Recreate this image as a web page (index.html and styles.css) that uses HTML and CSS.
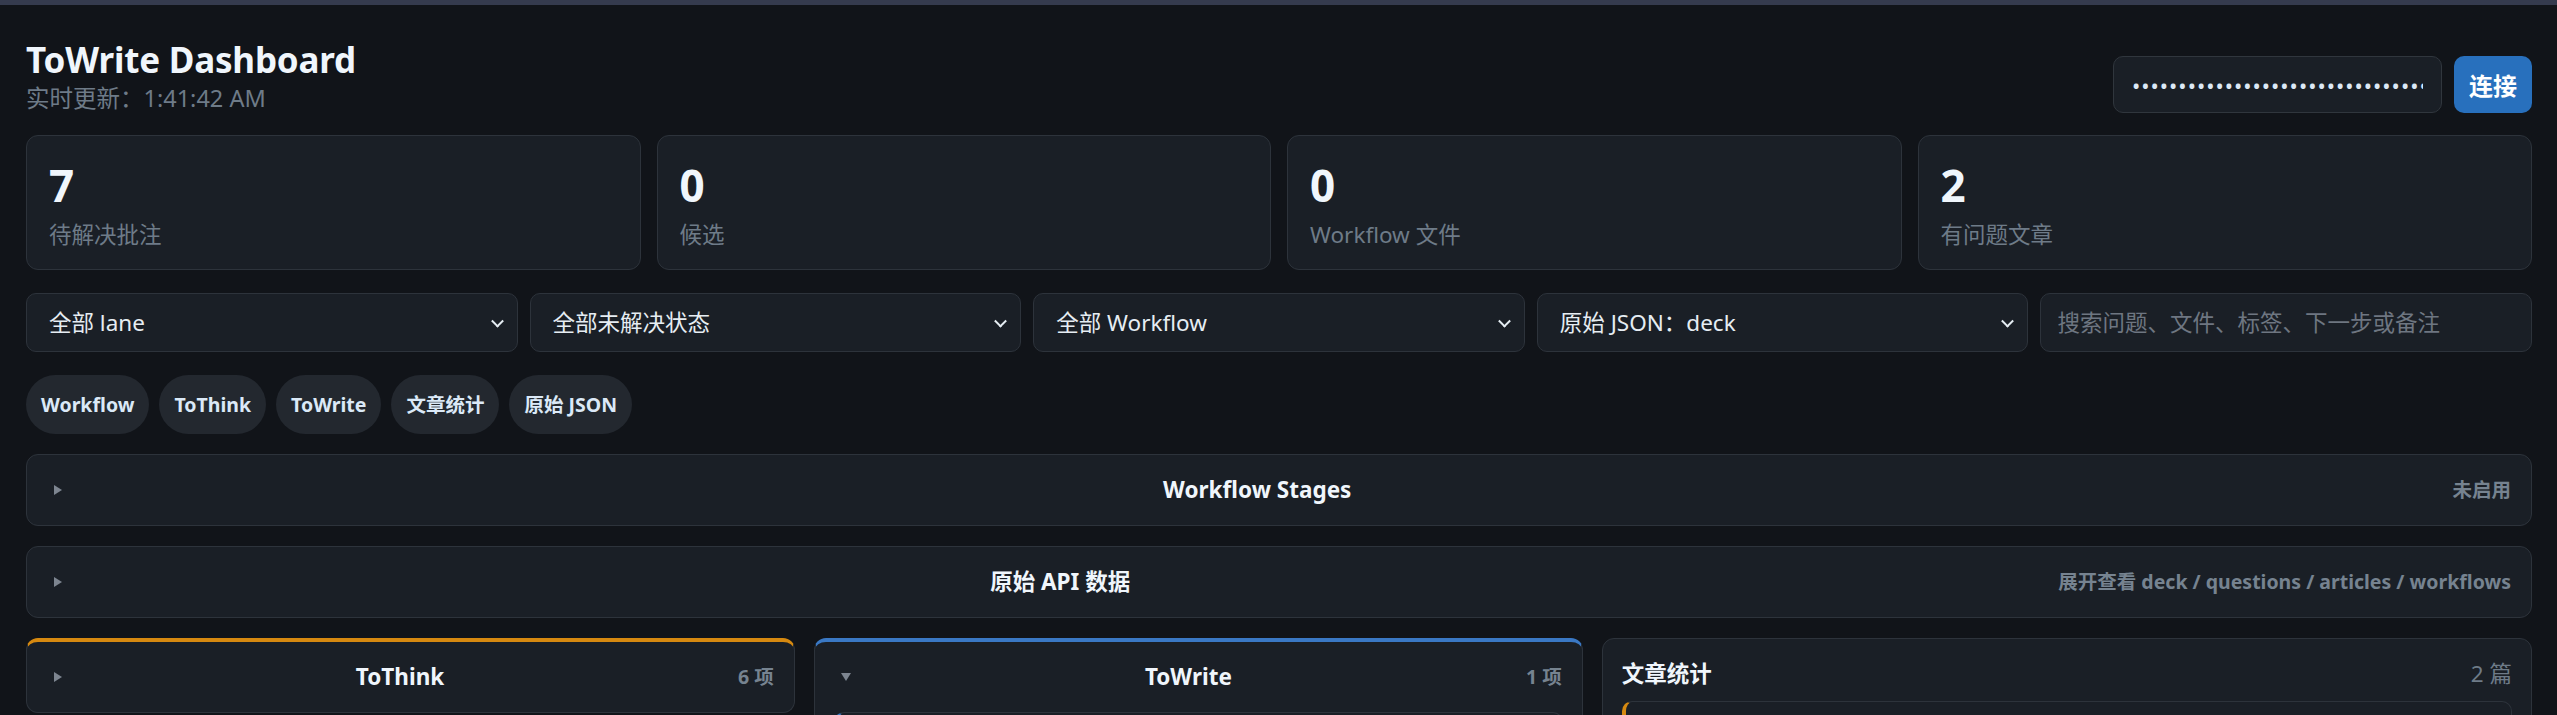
FILE: index.html
```html
<!DOCTYPE html>
<html lang="zh-CN">

<head>
    <meta charset="UTF-8">
    <meta name="viewport" content="width=device-width, initial-scale=1.0">
    <title>ToWrite Dashboard</title>
    <link rel="stylesheet" href="styles.css">
</head>

<body>
    <div class="topbar"></div>
    <main class="page">
        <header class="page-header">
            <div class="brand">
                <h1>ToWrite Dashboard</h1>
                <p class="updated">实时更新：1:41:42 AM</p>
            </div>
            <div class="connect">
                <input type="password" class="token-input" value="towrite-local-dashboard-token-2024-xx">
                <button class="connect-btn">连接</button>
            </div>
        </header>

        <section class="stats">
            <div class="stat">
                <div class="stat-num">7</div>
                <div class="stat-label">待解决批注</div>
            </div>
            <div class="stat">
                <div class="stat-num">0</div>
                <div class="stat-label">候选</div>
            </div>
            <div class="stat">
                <div class="stat-num">0</div>
                <div class="stat-label">Workflow 文件</div>
            </div>
            <div class="stat">
                <div class="stat-num">2</div>
                <div class="stat-label">有问题文章</div>
            </div>
        </section>

        <section class="filters">
            <div class="select-wrap">
                <select class="filter">
                    <option>全部 lane</option>
                </select>
            </div>
            <div class="select-wrap">
                <select class="filter">
                    <option>全部未解决状态</option>
                </select>
            </div>
            <div class="select-wrap">
                <select class="filter">
                    <option>全部 Workflow</option>
                </select>
            </div>
            <div class="select-wrap">
                <select class="filter">
                    <option>原始 JSON：deck</option>
                </select>
            </div>
            <input type="text" class="filter search" placeholder="搜索问题、文件、标签、下一步或备注">
        </section>

        <nav class="chips">
            <button class="chip">Workflow</button>
            <button class="chip">ToThink</button>
            <button class="chip">ToWrite</button>
            <button class="chip">文章统计</button>
            <button class="chip">原始 JSON</button>
        </nav>

        <details class="panel">
            <summary class="panel-head">
                <span class="caret"></span>
                <span class="panel-title">Workflow Stages</span>
                <span class="panel-meta">未启用</span>
            </summary>
        </details>

        <details class="panel">
            <summary class="panel-head">
                <span class="caret"></span>
                <span class="panel-title">原始 API 数据</span>
                <span class="panel-meta">展开查看 deck / questions / articles / workflows</span>
            </summary>
        </details>

        <section class="lanes">
            <details class="lane lane-think">
                <summary class="panel-head">
                    <span class="caret"></span>
                    <span class="panel-title">ToThink</span>
                    <span class="panel-meta">6 项</span>
                </summary>
                <div class="lane-body">
                    <div class="item item-think">
                        <div class="item-title">待思考的批注</div>
                    </div>
                </div>
            </details>

            <details class="lane lane-write" open>
                <summary class="panel-head">
                    <span class="caret"></span>
                    <span class="panel-title">ToWrite</span>
                    <span class="panel-meta">1 项</span>
                </summary>
                <div class="lane-body">
                    <div class="item item-write">
                        <div class="item-title">补写段落</div>
                        <div class="item-meta">articles / draft.md</div>
                    </div>
                </div>
            </details>

            <div class="lane articles">
                <div class="articles-head">
                    <span class="articles-title">文章统计</span>
                    <span class="articles-count">2 篇</span>
                </div>
                <div class="lane-body">
                    <div class="item item-think">
                        <div class="item-title">draft.md</div>
                        <div class="item-meta">5 条批注</div>
                    </div>
                    <div class="item item-think">
                        <div class="item-title">notes.md</div>
                        <div class="item-meta">2 条批注</div>
                    </div>
                </div>
            </div>
        </section>
    </main>
</body>

</html>
```

FILE: styles.css
```css
html {
    scrollbar-width: none;
}

body {
    margin: 0;
    background-color: #111419;
    color: #e6edf3;
    font-family: "Noto Sans", "Noto Sans CJK SC", sans-serif;
    font-size: 22.5px;
}

.topbar {
    height: 5px;
    background-color: #353b4e;
}

.page {
    display: flex;
    flex-direction: column;
    gap: 20px;
    padding: 33px 25px 40px 26px;
}

/* HEADER */
.page-header {
    display: flex;
    justify-content: space-between;
    align-items: flex-end;
}

.brand h1 {
    margin: 0;
    font-size: 35px;
    line-height: 43px;
    font-weight: 700;
    letter-spacing: -0.2px;
    color: #f0f6fc;
}

.updated {
    margin: 2px 0 0;
    font-size: 23.5px;
    line-height: 30px;
    color: #6e7b88;
}

.connect {
    display: flex;
    gap: 12px;
}

.token-input {
    box-sizing: border-box;
    width: 329px;
    height: 57px;
    padding: 0 18px;
    background-color: #1a1f26;
    border: 1px solid #30363d;
    border-radius: 10px;
    color: #dce8f5;
    font-family: inherit;
    font-size: 22px;
    letter-spacing: 1px;
    outline: none;
}

.connect-btn {
    height: 57px;
    width: 78px;
    background-color: #2870bd;
    color: #fff;
    border: none;
    border-radius: 10px;
    font-family: inherit;
    font-size: 24px;
    font-weight: 700;
    cursor: pointer;
}

/* STATS */
.stats {
    display: grid;
    grid-template-columns: repeat(4, 1fr);
    gap: 16px;
    margin-top: 2px;
}

.stat {
    background-color: #1a1f26;
    border: 1px solid #2d333b;
    border-radius: 12px;
    padding: 24px 22px 18px;
}

.stat-num {
    font-size: 44px;
    line-height: 50px;
    font-weight: 700;
    color: #f0f6fc;
}

.stat-label {
    margin-top: 9px;
    line-height: 32px;
    color: #6e7b88;
}

/* FILTERS */
.filters {
    display: grid;
    grid-template-columns: repeat(5, 1fr);
    gap: 12px;
    margin-top: 3px;
}

.select-wrap {
    position: relative;
}

.select-wrap::after {
    content: "";
    position: absolute;
    right: 16px;
    top: 50%;
    width: 7px;
    height: 7px;
    border-right: 2px solid #e6edf3;
    border-bottom: 2px solid #e6edf3;
    transform: translateY(-70%) rotate(45deg);
    pointer-events: none;
}

.filter {
    box-sizing: border-box;
    width: 100%;
    height: 59px;
    padding: 0 22px;
    background-color: #1a1f26;
    border: 1px solid #2d333b;
    border-radius: 10px;
    color: #e6edf3;
    font-family: inherit;
    font-size: 22.5px;
    appearance: none;
    outline: none;
}

.search {
    padding: 0 16px;
}

.search::placeholder {
    color: #6e7681;
}

/* CHIPS */
.chips {
    display: flex;
    gap: 10px;
    margin-top: 3px;
}

.chip {
    padding: 18px 15px;
    background-color: #23282f;
    border: none;
    border-radius: 999px;
    color: #dbe9f7;
    font-family: inherit;
    font-size: 19.5px;
    line-height: 23px;
    font-weight: 700;
    cursor: pointer;
}

/* PANELS */
.panel,
.lane {
    background-color: #1a1f26;
    border: 1px solid #2d333b;
    border-radius: 12px;
}

.panel-head {
    display: flex;
    justify-content: space-between;
    align-items: center;
    padding: 20px 20px;
    line-height: 30px;
    list-style: none;
    cursor: pointer;
}

.panel-head::-webkit-details-marker {
    display: none;
}

.caret {
    width: 0;
    height: 0;
    margin-left: 7px;
    border-left: 8px solid #7d8590;
    border-top: 5px solid transparent;
    border-bottom: 5px solid transparent;
}

details[open] > .panel-head .caret {
    margin-left: 6px;
    border-top: 8px solid #7d8590;
    border-left: 5px solid transparent;
    border-right: 5px solid transparent;
    border-bottom: none;
}

.panel-title {
    font-weight: 700;
    color: #f0f6fc;
}

.panel-meta {
    font-size: 19.5px;
    font-weight: 700;
    color: #768390;
}

/* LANES */
.lanes {
    display: grid;
    grid-template-columns: 1fr 1fr 1.21fr;
    gap: 19px;
    align-items: start;
}

.lane-think {
    border-top: 4px solid #d68910;
}

.lane-write {
    border-top: 4px solid #3a78c4;
}

.lane-body {
    display: flex;
    flex-direction: column;
    gap: 12px;
    padding: 0 19px 19px;
}

.articles-head {
    display: flex;
    justify-content: space-between;
    align-items: center;
    padding: 20px 19px 12px;
    line-height: 30px;
}

.articles-title {
    font-weight: 700;
    color: #f0f6fc;
}

.articles-count {
    color: #6e7b88;
}

.item {
    background-color: #1a1f26;
    border: 1px solid #2d333b;
    border-radius: 10px;
    padding: 24px 18px 16px;
}

.item-think {
    border-left: 4px solid #d68910;
}

.item-write {
    border-left: 4px solid #3a78c4;
}

.item-title {
    font-weight: 700;
    color: #f0f6fc;
}

.item-meta {
    margin-top: 6px;
    font-size: 19.5px;
    color: #768390;
}
```
